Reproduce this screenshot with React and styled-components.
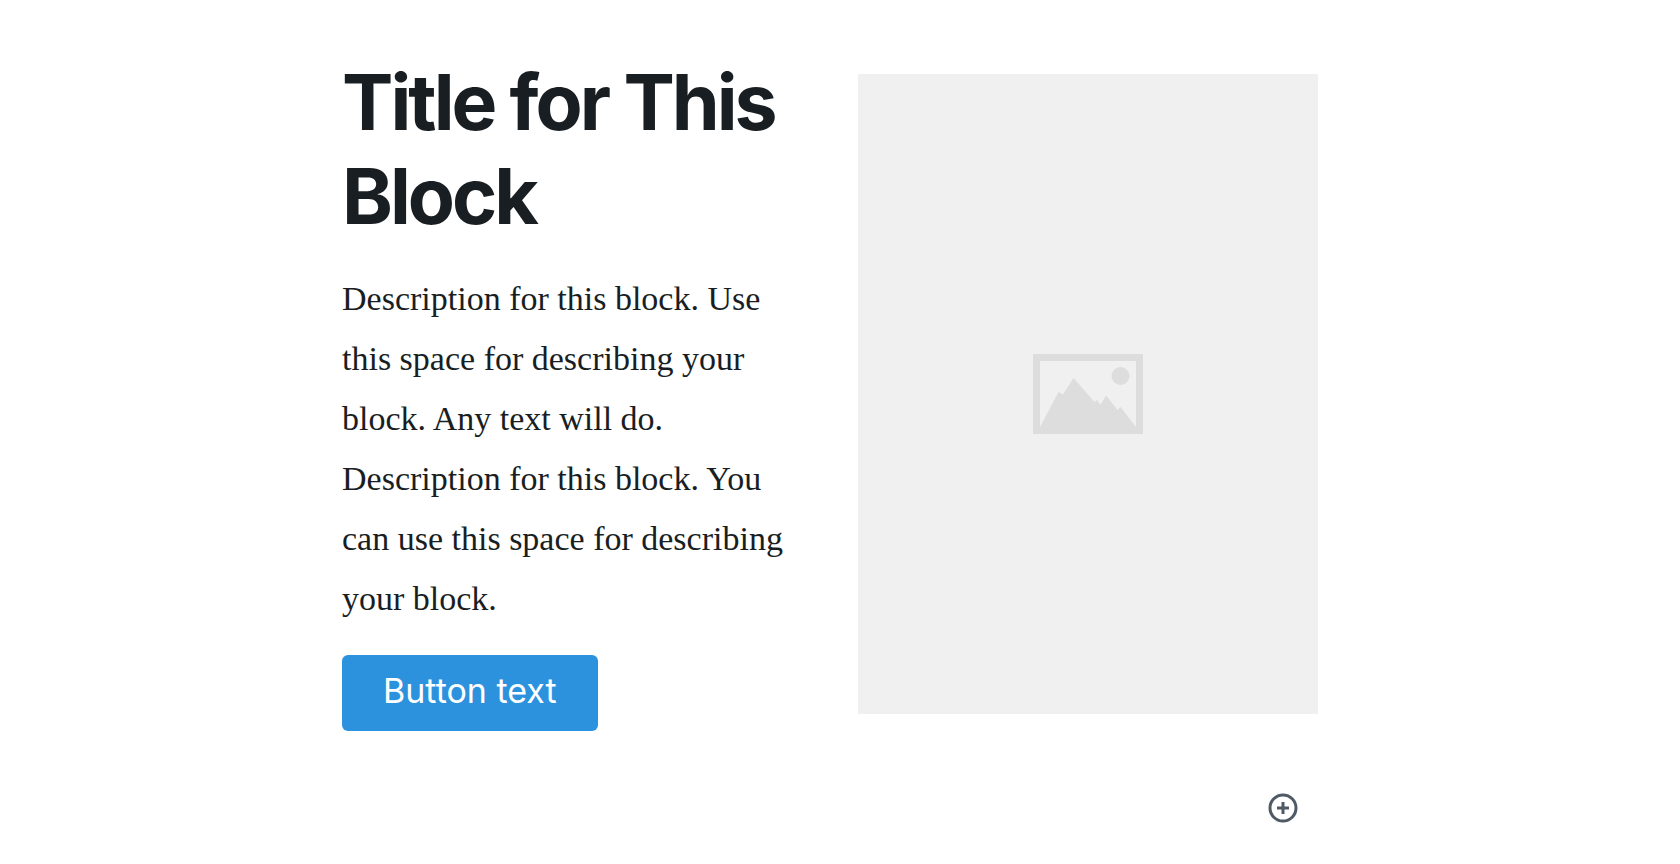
import React from "react";
import styled, { createGlobalStyle } from "styled-components";

const GlobalStyle = createGlobalStyle`
  *, *::before, *::after { box-sizing: border-box; }
  body {
    margin: 0;
    background: #fff;
    color: #191e23;
    font-family: Inter, "Liberation Sans", sans-serif;
  }
`;

const Page = styled.main`
  padding: 55px 40px 32px 20px;
`;

const Editor = styled.div`
  max-width: 976px;
  margin: 0 auto;
`;

const MediaBlock = styled.section`
  display: grid;
  grid-template-columns: minmax(0, 1fr) minmax(0, 1fr);
  align-items: start;
  column-gap: 56px;
`;

const Content = styled.div`
  display: flex;
  flex-direction: column;
  align-items: flex-start;
`;

const Title = styled.h1`
  margin: 0 0 26px;
  font-size: 77px;
  font-weight: 700;
  line-height: 94px;
  letter-spacing: -3px;
`;

const Description = styled.p`
  margin: 0 0 26px;
  font-family: "Liberation Serif", serif;
  font-size: 34px;
  line-height: 60px;
`;

const ActionButton = styled.button`
  min-height: 76px;
  padding: 14px 41px 18px;
  border: 0;
  border-radius: 6px;
  background: #2c92de;
  color: #fff;
  font-family: inherit;
  font-size: 34px;
  font-weight: 400;
  line-height: 44px;
  white-space: nowrap;
  cursor: pointer;
`;

const Placeholder = styled.figure`
  display: grid;
  place-items: center;
  height: 640px;
  margin: 19px 0 0;
  background: #f0f0f0;
  color: #ddd;
`;

const Toolbar = styled.div`
  display: flex;
  justify-content: flex-end;
  padding: 62px 20px 0;
`;

const InserterButton = styled.button`
  display: flex;
  padding: 0;
  border: 0;
  background: none;
  color: #4f5a66;
  cursor: pointer;
`;

const ImageIcon = () => (
  <svg width="110" height="80" viewBox="0 0 110 80" role="img" aria-label="Image placeholder">
    <path
      fill="currentColor"
      fillRule="evenodd"
      d="M0 0H110V80H0ZM7 7V73L25.500 38 30 40.500 40.500 24 61.500 48 64 46 67.500 51 73 41.500 84.500 56 87.500 53 103 73V7Z"
    />
    <circle cx="87.500" cy="22" r="9" fill="currentColor" />
  </svg>
);

const PlusIcon = () => (
  <svg width="30" height="30" viewBox="0 0 30 30" fill="none" stroke="currentColor" strokeWidth="3" aria-hidden="true">
    <circle cx="15" cy="15" r="13" />
    <path d="M15 9V21M9 15H21" />
  </svg>
);

export default function App() {
  return (
    <>
      <GlobalStyle />
      <Page>
        <Editor>
          <MediaBlock>
            <Content>
              <Title>Title for This Block</Title>
              <Description>
                Description for this block. Use this space for describing your
                block. Any text will do. Description for this block. You can use
                this space for describing your block.
              </Description>
              <ActionButton type="button">Button text</ActionButton>
            </Content>
            <Placeholder>
              <ImageIcon />
            </Placeholder>
          </MediaBlock>
          <Toolbar>
            <InserterButton type="button" aria-label="Add block">
              <PlusIcon />
            </InserterButton>
          </Toolbar>
        </Editor>
      </Page>
    </>
  );
}
